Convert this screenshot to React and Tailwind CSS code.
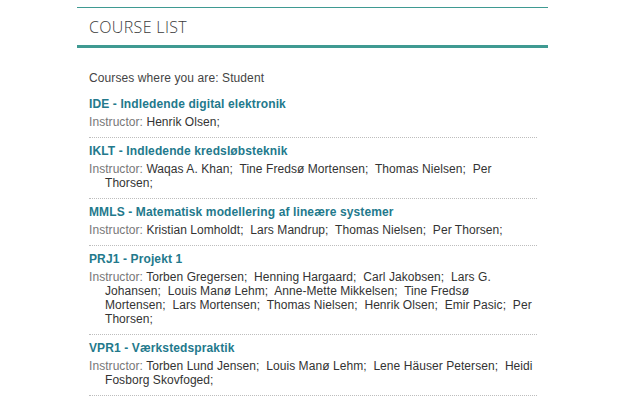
import React from "react";

const courses = [
  { code: "IDE", name: "Indledende digital elektronik", instructors: ["Henrik Olsen"] },
  { code: "IKLT", name: "Indledende kredsløbsteknik", instructors: ["Waqas A. Khan", "Tine Fredsø Mortensen", "Thomas Nielsen", "Per Thorsen"] },
  { code: "MMLS", name: "Matematisk modellering af lineære systemer", instructors: ["Kristian Lomholdt", "Lars Mandrup", "Thomas Nielsen", "Per Thorsen"] },
  { code: "PRJ1", name: "Projekt 1", instructors: ["Torben Gregersen", "Henning Hargaard", "Carl Jakobsen", "Lars G. Johansen", "Louis Manø Lehm", "Anne-Mette Mikkelsen", "Tine Fredsø Mortensen", "Lars Mortensen", "Thomas Nielsen", "Henrik Olsen", "Emir Pasic", "Per Thorsen"] },
  { code: "VPR1", name: "Værkstedspraktik", instructors: ["Torben Lund Jensen", "Louis Manø Lehm", "Lene Häuser Petersen", "Heidi Fosborg Skovfoged"] },
];

export default function App() {
  return (
    <div className="w-[640px] h-[400px] bg-white overflow-hidden" style={{ fontFamily: '"Liberation Sans", Arial, sans-serif' }}>
      <div className="ml-[77px] mt-[7px] w-[471px]">
        <div className="border-t border-[#3f9a92] border-b-[3px] border-b-[#3f9a92] h-[41px] pl-[12px] pt-[10px]">
          <h1 className="text-[16px] leading-[18px] font-light text-[#3b3b3b] tracking-[0.35px]" style={{ fontFamily: '"Open Sans", sans-serif' }}>COURSE LIST</h1>
        </div>
        <div className="pl-[12px] pr-[11px] pt-[23px] text-[12px]">
          <div className="leading-[14px] text-[#444] tracking-[0.1px]">Courses where you are: Student</div>
          <div className="mt-[6px]">
            {courses.map((c) => (
              <div key={c.code} className="border-b border-dotted border-[#bdbdbd] pt-[5px] pb-[8px]">
                <div className="font-bold leading-[16px] text-[#23798c] tracking-[0.12px]">{c.code} - {c.name}</div>
                <div className="mt-[3px] leading-[14px] pl-4 pr-[3px] -indent-4 text-[#333] tracking-[0.06px]">
                  <span className="text-[#777]">Instructor: </span>
                  {c.instructors.map((n, i) => (
                    <React.Fragment key={i}>{n};{i < c.instructors.length - 1 ? "\u00a0 " : ""}</React.Fragment>
                  ))}
                </div>
              </div>
            ))}
          </div>
        </div>
      </div>
    </div>
  );
}
